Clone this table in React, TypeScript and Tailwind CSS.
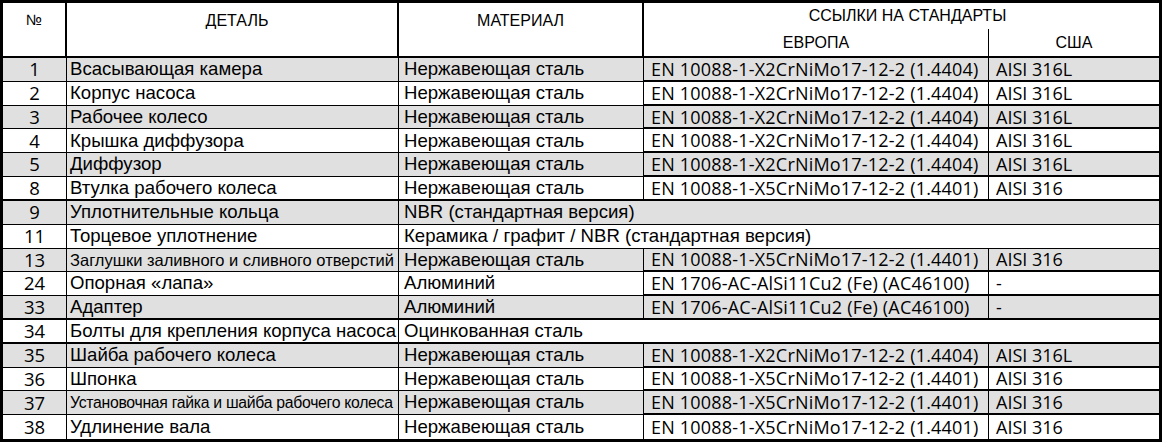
import React from "react";

type Row = {
  n: string;
  d: string;
  dSize?: "small" | "narrow";
  m?: string;
  eu?: string;
  us?: string;
  span?: string;
  thick?: boolean;
};

const X2 = "EN 10088-1-X2CrNiMo17-12-2 (1.4404)";
const X5 = "EN 10088-1-X5CrNiMo17-12-2 (1.4401)";
const AL = "EN 1706-AC-AlSi11Cu2 (Fe) (AC46100)";
const SS = "Нержавеющая сталь";

const rows: Row[] = [
  { n: "1", d: "Всасывающая камера", m: SS, eu: X2, us: "AISI 316L" },
  { n: "2", d: "Корпус насоса", m: SS, eu: X2, us: "AISI 316L" },
  { n: "3", d: "Рабочее колесо", m: SS, eu: X2, us: "AISI 316L" },
  { n: "4", d: "Крышка диффузора", m: SS, eu: X2, us: "AISI 316L" },
  { n: "5", d: "Диффузор", m: SS, eu: X2, us: "AISI 316L" },
  { n: "8", d: "Втулка рабочего колеса", m: SS, eu: X5, us: "AISI 316", thick: true },
  { n: "9", d: "Уплотнительные кольца", span: "NBR (стандартная версия)" },
  { n: "11", d: "Торцевое уплотнение", span: "Керамика / графит / NBR (стандартная версия)" },
  { n: "13", d: "Заглушки заливного и сливного отверстий", dSize: "small", m: SS, eu: X5, us: "AISI 316" },
  { n: "24", d: "Опорная «лапа»", m: "Алюминий", eu: AL, us: "-" },
  { n: "33", d: "Адаптер", m: "Алюминий", eu: AL, us: "-", thick: true },
  { n: "34", d: "Болты для крепления корпуса насоса", span: "Оцинкованная сталь", thick: true },
  { n: "35", d: "Шайба рабочего колеса", m: SS, eu: X2, us: "AISI 316L" },
  { n: "36", d: "Шпонка", m: SS, eu: X5, us: "AISI 316" },
  { n: "37", d: "Установочная гайка и шайба рабочего колеса", dSize: "narrow", m: SS, eu: X5, us: "AISI 316" },
  { n: "38", d: "Удлинение вала", m: SS, eu: X5, us: "AISI 316" },
];

const arial = "font-['Liberation_Sans',Arial,sans-serif]";
const segoe = "font-['Open_Sans','Noto_Sans',sans-serif]";

export default function App() {
  return (
    <div className="w-[1162px] h-[442px] bg-white">
      <div className="box-border w-[1162px] h-[442px] border-[3px] border-black grid grid-cols-[64px_332px_245px_345px_1fr] grid-rows-[26px_29px_repeat(16,1fr)] text-black">
        {/* header */}
        <div className={`row-span-2 border-r-2 border-b-2 border-black flex justify-center pt-[6px] text-[15px] ${arial}`}>№</div>
        <div className={`row-span-2 border-r-2 border-b-2 border-black flex justify-center pt-[6px] pl-[10px] text-[16px] ${arial}`}>ДЕТАЛЬ</div>
        <div className={`row-span-2 border-r-2 border-b-2 border-black flex justify-center pt-[6px] text-[16px] ${arial}`}>МАТЕРИАЛ</div>
        <div className={`col-span-2 flex justify-center items-center pl-[12px] text-[16px] ${arial}`}>ССЫЛКИ НА СТАНДАРТЫ</div>
        <div className={`border-r border-b-2 border-black flex justify-center items-center text-[16px] ${arial}`}>ЕВРОПА</div>
        <div className={`border-b-2 border-black flex justify-center items-center text-[16px] ${arial}`}>США</div>

        {rows.map((r, i) => {
          const bg = i % 2 === 0 ? "bg-[#e0e0e0]" : "bg-white";
          const bl = r.thick ? "border-b-2" : "border-b";
          const last = i === rows.length - 1;
          const b = last ? "" : bl;
          const b2 = last ? "" : "border-b-2";
          const dCls =
            r.dSize === "small"
              ? "text-[16.5px]"
              : r.dSize === "narrow"
              ? "text-[15.8px] tracking-[-0.3px]"
              : "text-[18.6px]";
          return (
            <React.Fragment key={r.n}>
              <div className={`${bg} ${b} border-r border-black flex items-center justify-center text-[18.5px] leading-none ${segoe}`}>{r.n}</div>
              <div className={`${bg} ${b} border-r border-black flex items-center pl-[3px] whitespace-nowrap overflow-hidden leading-none ${arial} ${dCls}`}>{r.d}</div>
              {r.span ? (
                <div className={`${bg} ${b} col-span-3 border-black flex items-center pl-[5px] whitespace-nowrap text-[18.6px] leading-none ${arial}`}>{r.span}</div>
              ) : (
                <>
                  <div className={`${bg} ${b} border-r border-black flex items-center pl-[5px] whitespace-nowrap text-[18.6px] leading-none ${arial}`}>{r.m}</div>
                  <div className={`${bg} ${b2} border-r border-black flex items-center pl-[7px] whitespace-nowrap text-[18px] tracking-[0.2px] leading-none ${segoe}`}>{r.eu}</div>
                  <div className={`${bg} ${b2} border-black flex items-center pl-[7px] whitespace-nowrap text-[18px] leading-none ${segoe}`}>{r.us}</div>
                </>
              )}
            </React.Fragment>
          );
        })}
      </div>
    </div>
  );
}
